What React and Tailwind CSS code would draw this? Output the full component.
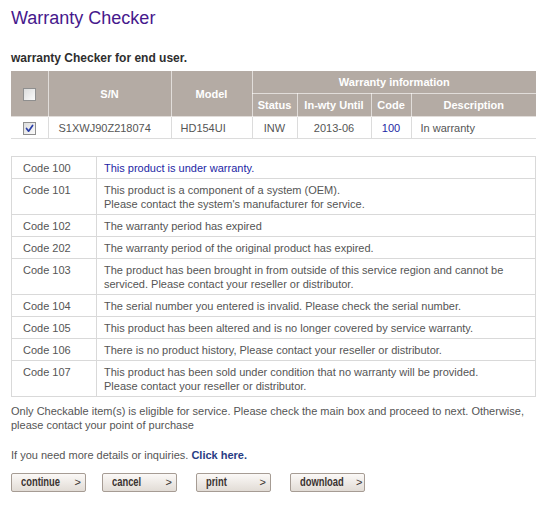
import React from "react";

const codes = [
  { code: "Code 100", lines: ["This product is under warranty."], blue: true },
  { code: "Code 101", lines: ["This product is a component of a system (OEM).", "Please contact the system's manufacturer for service."] },
  { code: "Code 102", lines: ["The warranty period has expired"] },
  { code: "Code 202", lines: ["The warranty period of the original product has expired."] },
  { code: "Code 103", lines: ["The product has been brought in from outside of this service region and cannot be", "serviced. Please contact your reseller or distributor."] },
  { code: "Code 104", lines: ["The serial number you entered is invalid. Please check the serial number."] },
  { code: "Code 105", lines: ["This product has been altered and is no longer covered by service warranty."] },
  { code: "Code 106", lines: ["There is no product history, Please contact your reseller or distributor."] },
  { code: "Code 107", lines: ["This product has been sold under condition that no warranty will be provided.", "Please contact your reseller or distributor."] },
];

function Box({ checked }) {
  return (
    <span className="inline-flex h-[13px] w-[13px] items-center justify-center border border-[#8f8f8f] bg-gradient-to-br from-[#dcdcdc] to-[#fbfbfb] align-middle">
      {checked && (
        <svg width="9" height="9" viewBox="0 0 9 9">
          <path d="M1.5 4.5 L3.6 7.2 L7.6 1.5" fill="none" stroke="#2a3fa8" strokeWidth="1.7" strokeLinecap="round" strokeLinejoin="round" />
        </svg>
      )}
    </span>
  );
}

function Btn({ label, className = "" }) {
  return (
    <button
      className={
        "flex h-[19px] w-[75px] items-center justify-between rounded-[2px] border border-[#a69c94] bg-gradient-to-b from-[#fbf9f7] to-[#e2dcd6] pl-[9px] pr-[4px] text-[12px] leading-[17px] text-[#3a3330] " +
        className
      }
    >
      <span className="inline-block origin-left scale-x-[0.78] font-bold">{label}</span>
      <span className="text-[11px]">&gt;</span>
    </button>
  );
}

export default function App() {
  const th = "border border-white/60 text-center font-bold text-white";
  const td = "border-b border-[#dcdcdc] px-[6px]";
  return (
    <div
      className="w-[554px] bg-white px-[11px] pt-[7px] pb-[12px] text-[11px] text-[#555]"
      style={{ fontFamily: '"Liberation Sans", Arial, sans-serif' }}
    >
      <h1 className="text-[18px] leading-[22px] text-[#46188c]">Warranty Checker</h1>

      <h2 className="mt-[21px] text-[12px] font-bold leading-[16px] text-[#2e2e2e]">warranty Checker for end user.</h2>

      <table className="mt-[4px] w-[525px] table-fixed border-collapse text-[11px] leading-[14px]">
        <colgroup>
          <col className="w-[37px]" />
          <col className="w-[123px]" />
          <col className="w-[81px]" />
          <col className="w-[45px]" />
          <col className="w-[74px]" />
          <col className="w-[40px]" />
          <col className="w-[125px]" />
        </colgroup>
        <thead className="bg-[#b4aba4]">
          <tr className="h-[23px]">
            <th rowSpan={2} className={th + " border-l-0"}>
              <Box />
            </th>
            <th rowSpan={2} className={th}>S/N</th>
            <th rowSpan={2} className={th}>Model</th>
            <th colSpan={4} className={th + " border-r-0"}>Warranty information</th>
          </tr>
          <tr className="h-[23px]">
            <th className={th}>Status</th>
            <th className={th}>In-wty Until</th>
            <th className={th}>Code</th>
            <th className={th + " border-r-0"}>Description</th>
          </tr>
        </thead>
        <tbody className="text-[#555]">
          <tr className="h-[22px]">
            <td className={td + " border-r text-center"}>
              <Box checked />
            </td>
            <td className={td + " border-r pl-[10px]"}>S1XWJ90Z218074</td>
            <td className={td + " border-r pl-[9px]"}>HD154UI</td>
            <td className={td + " border-r text-center"}>INW</td>
            <td className={td + " border-r text-center"}>2013-06</td>
            <td className={td + " border-r text-center"}>
              <span className="text-[#1d1fa5]">100</span>
            </td>
            <td className={td + " pl-[9px]"}>In warranty</td>
          </tr>
        </tbody>
      </table>

      <table className="mt-[17px] w-[525px] table-fixed border-collapse text-[11px] leading-[14px]">
        <colgroup>
          <col className="w-[85px]" />
          <col />
        </colgroup>
        <tbody>
          {codes.map((c) => (
            <tr key={c.code}>
              <td className="border border-[#d9d9d9] px-[11px] pt-[4px] pb-[3px] align-top text-[#555]">{c.code}</td>
              <td className={"border border-[#d9d9d9] px-[7px] pt-[4px] pb-[3px] align-top " + (c.blue ? "text-[#1d1fa5]" : "text-[#555]")}>
                {c.lines.map((l) => (
                  <div key={l}>{l}</div>
                ))}
              </td>
            </tr>
          ))}
        </tbody>
      </table>

      <p className="mt-[7px] leading-[14px]">
        Only Checkable item(s) is eligible for service. Please check the main box and proceed to next. Otherwise,
        <br />
        please contact your point of purchase
      </p>

      <p className="mt-[16px] leading-[14px]">
        If you need more details or inquiries. <a className="font-bold text-[#283c84]">Click here.</a>
      </p>

      <div className="mt-[11px] flex">
        <Btn label="continue" />
        <Btn label="cancel" className="ml-[16px]" />
        <Btn label="print" className="ml-[19px]" />
        <Btn label="download" className="ml-[19px]" />
      </div>
    </div>
  );
}
